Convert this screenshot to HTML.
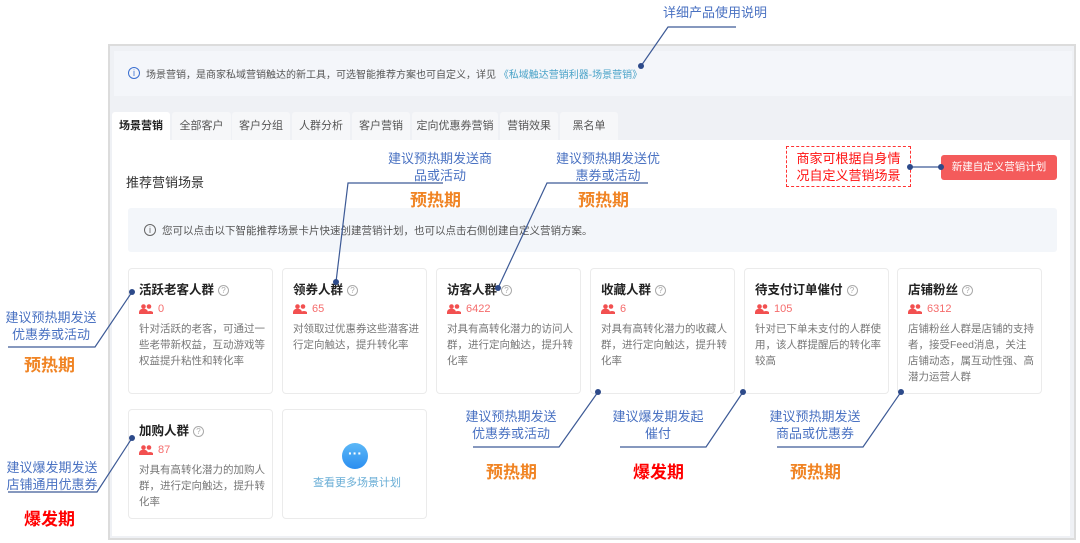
<!DOCTYPE html><html><head><meta charset="utf-8"><style>
*{margin:0;padding:0;box-sizing:border-box}
body{width:1080px;height:543px;background:#fff;position:relative;overflow:hidden;font-family:"Liberation Sans","Noto Sans CJK SC",sans-serif}
.a{position:absolute;white-space:nowrap}
.frame{position:absolute;left:108px;top:44px;width:968px;height:496px;border:2px solid #dcdcdc;background:#eff1f5}
.tab{position:absolute;top:112px;height:28px;background:#f6f7f9;font-size:11px;color:#555;text-align:center;line-height:28px;border-radius:3px 3px 0 0}
.card{position:absolute;width:145px;background:#fff;border:1px solid #ebebeb;border-radius:4px;padding:10px 0 0 10px}
.card h4{font-size:12.5px;color:#222;font-weight:bold;height:20px}
.card h4 i{display:inline-block;width:11px;height:11px;border:1px solid #aaa;border-radius:50%;font-size:8px;color:#aaa;font-style:normal;text-align:center;line-height:9px;margin-left:4px;vertical-align:1px;font-weight:normal}
.cnt{font-size:11px;color:#f56c6c;margin-top:4px;height:18px}
.cnt svg{vertical-align:-2px;margin-right:5px}
.d{font-size:10.5px;color:#777;line-height:16px;width:128px}
.bl{color:#4a72c2;font-size:13px;text-align:center;line-height:17px}
.or{color:#f08424;font-size:17px;font-weight:bold}
.rd{color:#f00;font-size:17px;font-weight:bold}
</style></head><body>
<div class="frame"></div>
<div class="a" style="left:114px;top:51px;width:958px;height:45px;background:#f4f6fa"></div>
<div class="a" style="left:128px;top:67px;width:12px;height:12px;border:1px solid #3a6fd0;border-radius:50%;font-size:9px;color:#3a6fd0;text-align:center;line-height:10px">i</div>
<div class="a" style="left:146px;top:66px;font-size:10px;color:#555">场景营销，是商家私域营销触达的新工具，可选智能推荐方案也可自定义，详见 <span style="color:#4aa3c8">《私域触达营销利器-场景营销》</span></div>
<div class="tab" style="left:112px;width:58px;background:#fff;color:#222;font-weight:bold">场景营销</div>
<div class="tab" style="left:172px;width:59px">全部客户</div>
<div class="tab" style="left:232px;width:58px">客户分组</div>
<div class="tab" style="left:292px;width:58px">人群分析</div>
<div class="tab" style="left:352px;width:58px">客户营销</div>
<div class="tab" style="left:412px;width:86px">定向优惠券营销</div>
<div class="tab" style="left:500px;width:58px">营销效果</div>
<div class="tab" style="left:560px;width:58px">黑名单</div>
<div class="a" style="left:112px;top:140px;width:958px;height:396px;background:#fff"></div>
<div class="a" style="left:126px;top:172px;font-size:13px;color:#333">推荐营销场景</div>
<div class="a" style="left:941px;top:155px;width:116px;height:25px;background:#f45b5b;border-radius:3px;color:#fff;font-size:10.5px;text-align:center;line-height:25px">新建自定义营销计划</div>
<div class="a" style="left:786px;top:146px;width:125px;height:41px;border:1.5px dashed #f33;color:#f11;font-size:13px;text-align:center;line-height:17px;padding-top:3px">商家可根据自身情<br>况自定义营销场景</div>
<div class="a" style="left:128px;top:208px;width:929px;height:44px;background:#f3f6fa;border-radius:3px"></div>
<div class="a" style="left:144px;top:224px;width:12px;height:12px;border:1px solid #666;border-radius:50%;font-size:9px;color:#666;text-align:center;line-height:10px">i</div>
<div class="a" style="left:162px;top:223px;font-size:10.5px;color:#555">您可以点击以下智能推荐场景卡片快速创建营销计划，也可以点击右侧创建自定义营销方案。</div>

<svg width="0" height="0" style="position:absolute"><defs><symbol id="p" viewBox="0 0 14 10"><circle cx="4.5" cy="2.5" r="2.3" fill="#f25050"/><circle cx="10" cy="2.5" r="2.3" fill="#f25050"/><path d="M0 10v-2a4 3 0 0 1 9 0v2zM8 10v-2a4 3 0 0 1 6 0v2z" fill="#f25050"/></symbol></defs></svg>

<div class="card" style="left:128px;top:268px;height:126px"><h4>活跃老客人群<i>?</i></h4><div class="cnt"><svg width="14" height="10"><use href="#p"/></svg>0</div><div class="d">针对活跃的老客，可通过一些老带新权益，互动游戏等权益提升粘性和转化率</div></div>
<div class="card" style="left:282px;top:268px;height:126px"><h4>领券人群<i>?</i></h4><div class="cnt"><svg width="14" height="10"><use href="#p"/></svg>65</div><div class="d">对领取过优惠券这些潜客进行定向触达，提升转化率</div></div>
<div class="card" style="left:436px;top:268px;height:126px"><h4>访客人群<i>?</i></h4><div class="cnt"><svg width="14" height="10"><use href="#p"/></svg>6422</div><div class="d">对具有高转化潜力的访问人群，进行定向触达，提升转化率</div></div>
<div class="card" style="left:590px;top:268px;height:126px"><h4>收藏人群<i>?</i></h4><div class="cnt"><svg width="14" height="10"><use href="#p"/></svg>6</div><div class="d">对具有高转化潜力的收藏人群，进行定向触达，提升转化率</div></div>
<div class="card" style="left:744px;top:268px;height:126px"><h4>待支付订单催付<i>?</i></h4><div class="cnt"><svg width="14" height="10"><use href="#p"/></svg>105</div><div class="d">针对已下单未支付的人群使用，该人群提醒后的转化率较高</div></div>
<div class="card" style="left:897px;top:268px;height:126px"><h4>店铺粉丝<i>?</i></h4><div class="cnt"><svg width="14" height="10"><use href="#p"/></svg>6312</div><div class="d">店铺粉丝人群是店铺的支持者，接受Feed消息，关注店铺动态，属互动性强、高潜力运营人群</div></div>
<div class="card" style="left:128px;top:409px;height:110px"><h4>加购人群<i>?</i></h4><div class="cnt"><svg width="14" height="10"><use href="#p"/></svg>87</div><div class="d">对具有高转化潜力的加购人群，进行定向触达，提升转化率</div></div>
<div class="card" style="left:282px;top:409px;height:110px;padding:0"><div class="a" style="left:59px;top:33px;width:26px;height:26px;border-radius:50%;background:linear-gradient(#5cb8f7,#2b8ef0);color:#fff;font-size:14px;text-align:center;line-height:20px;font-weight:bold">···</div><div class="a" style="left:30px;top:64px;font-size:11px;color:#6aaed6">查看更多场景计划</div></div>

<svg class="a" style="left:0;top:0" width="1080" height="543">
<g stroke="#3d5a96" stroke-width="1.2" fill="none">
<path d="M736 27H668L641 66"/>
<path d="M443 183H348L336 282"/>
<path d="M648 183H547L498 288"/>
<path d="M910 167H941"/>
<path d="M8 347H95L132 292"/>
<path d="M8 492H97L132 438"/>
<path d="M473 447H559L598 392"/>
<path d="M620 447H706L743 392"/>
<path d="M777 447H863L901 392"/>
</g>
<g fill="#2d4a8a"><circle cx="641" cy="66" r="3"/><circle cx="336" cy="282" r="3"/><circle cx="498" cy="288" r="3"/><circle cx="910" cy="167" r="3"/><circle cx="941" cy="167" r="3"/><circle cx="132" cy="292" r="3"/><circle cx="132" cy="438" r="3"/><circle cx="598" cy="392" r="3"/><circle cx="743" cy="392" r="3"/><circle cx="901" cy="392" r="3"/></g>
</svg>
<div class="a bl" style="left:655px;top:4px;width:120px">详细产品使用说明</div>
<div class="a bl" style="left:380px;top:150px;width:120px">建议预热期发送商<br>品或活动</div>
<div class="a or" style="left:410px;top:186px">预热期</div>
<div class="a bl" style="left:548px;top:150px;width:120px">建议预热期发送优<br>惠券或活动</div>
<div class="a or" style="left:578px;top:186px">预热期</div>
<div class="a bl" style="left:0;top:309px;width:102px">建议预热期发送<br>优惠券或活动</div>
<div class="a or" style="left:24px;top:351px">预热期</div>
<div class="a bl" style="left:0;top:459px;width:104px">建议爆发期发送<br>店铺通用优惠券</div>
<div class="a rd" style="left:24px;top:505px">爆发期</div>
<div class="a bl" style="left:461px;top:408px;width:100px">建议预热期发送<br>优惠券或活动</div>
<div class="a or" style="left:486px;top:458px">预热期</div>
<div class="a bl" style="left:608px;top:408px;width:100px">建议爆发期发起<br>催付</div>
<div class="a rd" style="left:633px;top:458px">爆发期</div>
<div class="a bl" style="left:765px;top:408px;width:100px">建议预热期发送<br>商品或优惠券</div>
<div class="a or" style="left:790px;top:458px">预热期</div>
</body></html>
